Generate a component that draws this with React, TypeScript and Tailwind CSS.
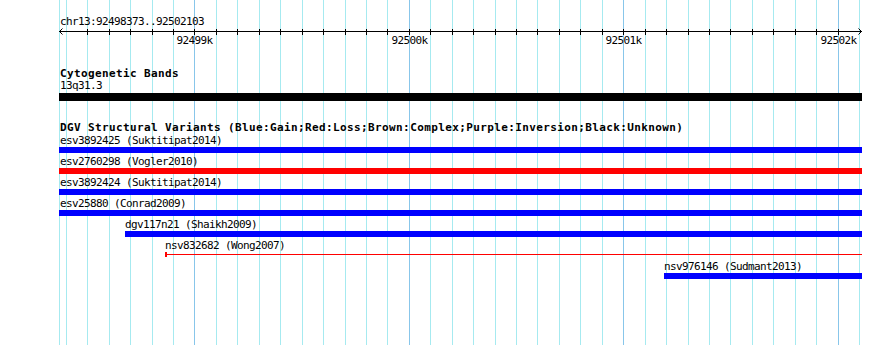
import React from "react";

const minor = [59, 66, 87, 109, 130, 152, 173, 216, 237, 259, 280, 302, 323, 345, 366, 387, 430, 452, 473, 495, 516, 537, 559, 580, 602, 645, 666, 688, 709, 730, 752, 773, 795, 816, 859];
const major = [194, 409, 623, 838];
const ticks = [...minor, ...major].filter((x) => x > 70 && x < 850).sort((a, b) => a - b);
const tickLabels = [
  { x: 194, t: "92499k" },
  { x: 409, t: "92500k" },
  { x: 623, t: "92501k" },
  { x: 838, t: "92502k" },
];

type Row = { label: string; ml: string; textPad: string; kind: "blue" | "red" | "line" };
const rows: Row[] = [
  { label: "esv3892425 (Suktitipat2014)", ml: "ml-[59px]", textPad: "pl-[1px]", kind: "blue" },
  { label: "esv2760298 (Vogler2010)", ml: "ml-[59px]", textPad: "pl-[1px]", kind: "red" },
  { label: "esv3892424 (Suktitipat2014)", ml: "ml-[59px]", textPad: "pl-[1px]", kind: "blue" },
  { label: "esv25880 (Conrad2009)", ml: "ml-[59px]", textPad: "pl-[1px]", kind: "blue" },
  { label: "dgv117n21 (Shaikh2009)", ml: "ml-[125px]", textPad: "pl-0", kind: "blue" },
  { label: "nsv832682 (Wong2007)", ml: "ml-[165px]", textPad: "pl-0", kind: "line" },
  { label: "nsv976146 (Sudmant2013)", ml: "ml-[664px]", textPad: "pl-0", kind: "blue" },
];

const small = "h-[15px] leading-[18px] text-[11px] tracking-[-0.62px] whitespace-nowrap";

export default function App() {
  return (
    <div className="relative w-[890px] h-[345px] overflow-hidden bg-white text-black font-['DejaVu_Sans_Mono',monospace]">
      <svg className="absolute inset-0" width={890} height={345}>
        {minor.map((x) => (
          <line key={"m" + x} x1={x + 0.5} x2={x + 0.5} y1={0} y2={345} stroke="#a6eaf0" strokeWidth={1} />
        ))}
        {major.map((x) => (
          <line key={"M" + x} x1={x + 0.5} x2={x + 0.5} y1={0} y2={345} stroke="#88c6ea" strokeWidth={1} />
        ))}
      </svg>

      <div className="relative flex flex-col">
        <div className="ml-[60px] mt-[13px] h-[13px] leading-[18px] text-[11px] tracking-[-0.62px] whitespace-nowrap">
          chr13:92498373..92502103
        </div>

        <svg className="block" width={890} height={22}>
          <line x1={59} x2={862} y1={5.5} y2={5.5} stroke="#000" strokeWidth={1} />
          <path d="M62.5 2.5 L59.5 5.5 L62.5 8.5" fill="none" stroke="#000" strokeWidth={1} />
          <path d="M858.5 2.5 L861.5 5.5 L858.5 8.5" fill="none" stroke="#000" strokeWidth={1} />
          {ticks.map((x) => (
            <line key={"t" + x} x1={x + 0.5} x2={x + 0.5} y1={3} y2={9} stroke="#000" strokeWidth={1} />
          ))}
          {tickLabels.map((l) => (
            <text
              key={l.t}
              x={l.x + 0.5}
              y={18}
              textAnchor="middle"
              fontFamily="'DejaVu Sans Mono', monospace"
              fontSize={11}
              letterSpacing={-0.62}
              fill="#000"
            >
              {l.t}
            </text>
          ))}
        </svg>

        <div className="ml-[60px] mt-[17px] h-[12px] leading-[18px] text-[11px] font-bold tracking-[0.38px] whitespace-nowrap">
          Cytogenetic Bands
        </div>
        <div className="ml-[60px] h-[16px] leading-[18px] text-[11px] tracking-[-0.62px] whitespace-nowrap">13q31.3</div>
        <div className="ml-[59px] mr-[28px] h-[8px] bg-black" />

        <div className="ml-[60px] mt-[18px] h-[13px] leading-[18px] text-[11px] font-bold tracking-[0.38px] whitespace-nowrap">
          DGV Structural Variants (Blue:Gain;Red:Loss;Brown:Complex;Purple:Inversion;Black:Unknown)
        </div>

        {rows.map((r) => (
          <div key={r.label} className={`${r.ml} mr-[28px] flex flex-col`}>
            <div className={`${small} ${r.textPad}`}>{r.label}</div>
            {r.kind === "blue" && <div className="h-[6px] bg-[#0000ff]" />}
            {r.kind === "red" && <div className="h-[6px] bg-[#ff0000]" />}
            {r.kind === "line" && (
              <div className="h-[6px] flex items-start">
                <div className="w-[2px] h-[5px] bg-[#ff0000]" />
                <div className="flex-1 h-[1px] mt-[2px] bg-[#ff0000]" />
              </div>
            )}
          </div>
        ))}
      </div>
    </div>
  );
}
